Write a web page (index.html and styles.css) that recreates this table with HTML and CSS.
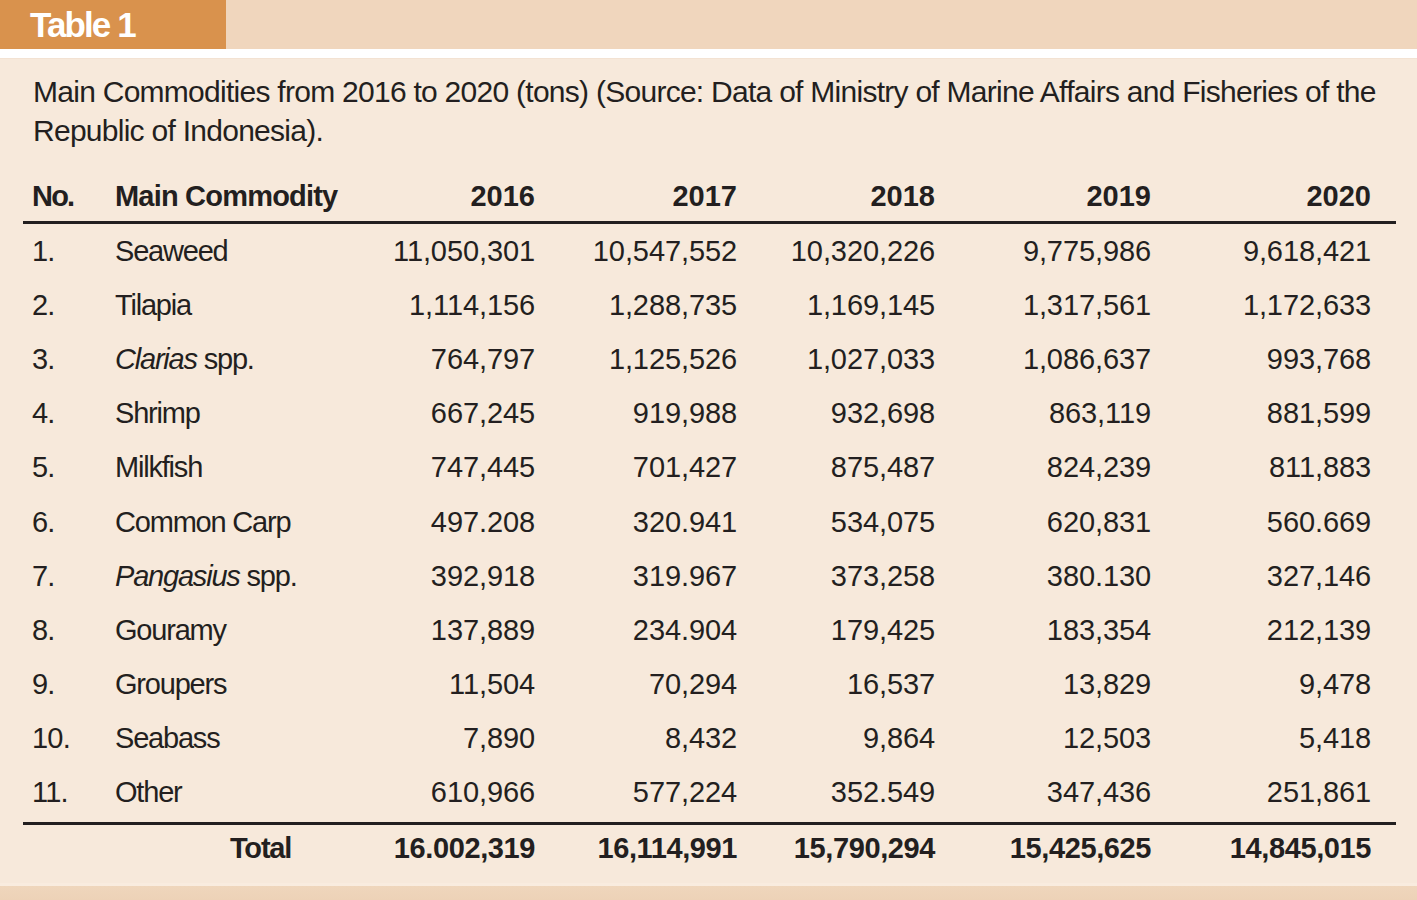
FILE: index.html
```html
<!DOCTYPE html>
<html lang="en">
<head>
<meta charset="utf-8">
<title>Table 1</title>
<link rel="stylesheet" href="styles.css">
</head>
<body>
<div class="page">
  <header class="topbar">
    <div class="tab">Table 1</div>
    <div class="fill"></div>
  </header>
  <div class="gap"></div>
  <main class="panel">
    <p class="caption">Main Commodities from 2016 to 2020 (tons) (Source: Data of Ministry of Marine Affairs and Fisheries of the Republic of Indonesia).</p>
    <table class="data">
      <colgroup>
        <col class="c-no"><col class="c-name"><col class="c-16"><col class="c-17"><col class="c-18"><col class="c-19"><col class="c-20">
      </colgroup>
      <thead>
        <tr><th class="no">No.</th><th class="name">Main Commodity</th><th class="num">2016</th><th class="num">2017</th><th class="num">2018</th><th class="num">2019</th><th class="num last">2020</th></tr>
      </thead>
      <tbody>
        <tr><td class="no">1.</td><td class="name">Seaweed</td><td class="num">11,050,301</td><td class="num">10,547,552</td><td class="num">10,320,226</td><td class="num">9,775,986</td><td class="num last">9,618,421</td></tr>
        <tr><td class="no">2.</td><td class="name">Tilapia</td><td class="num">1,114,156</td><td class="num">1,288,735</td><td class="num">1,169,145</td><td class="num">1,317,561</td><td class="num last">1,172,633</td></tr>
        <tr><td class="no">3.</td><td class="name"><i>Clarias</i> spp.</td><td class="num">764,797</td><td class="num">1,125,526</td><td class="num">1,027,033</td><td class="num">1,086,637</td><td class="num last">993,768</td></tr>
        <tr><td class="no">4.</td><td class="name">Shrimp</td><td class="num">667,245</td><td class="num">919,988</td><td class="num">932,698</td><td class="num">863,119</td><td class="num last">881,599</td></tr>
        <tr><td class="no">5.</td><td class="name">Milkfish</td><td class="num">747,445</td><td class="num">701,427</td><td class="num">875,487</td><td class="num">824,239</td><td class="num last">811,883</td></tr>
        <tr><td class="no">6.</td><td class="name">Common Carp</td><td class="num">497.208</td><td class="num">320.941</td><td class="num">534,075</td><td class="num">620,831</td><td class="num last">560.669</td></tr>
        <tr><td class="no">7.</td><td class="name"><i>Pangasius</i> spp.</td><td class="num">392,918</td><td class="num">319.967</td><td class="num">373,258</td><td class="num">380.130</td><td class="num last">327,146</td></tr>
        <tr><td class="no">8.</td><td class="name">Gouramy</td><td class="num">137,889</td><td class="num">234.904</td><td class="num">179,425</td><td class="num">183,354</td><td class="num last">212,139</td></tr>
        <tr><td class="no">9.</td><td class="name">Groupers</td><td class="num">11,504</td><td class="num">70,294</td><td class="num">16,537</td><td class="num">13,829</td><td class="num last">9,478</td></tr>
        <tr><td class="no">10.</td><td class="name">Seabass</td><td class="num">7,890</td><td class="num">8,432</td><td class="num">9,864</td><td class="num">12,503</td><td class="num last">5,418</td></tr>
        <tr class="end"><td class="no">11.</td><td class="name">Other</td><td class="num">610,966</td><td class="num">577,224</td><td class="num">352.549</td><td class="num">347,436</td><td class="num last">251,861</td></tr>
      </tbody>
      <tfoot>
        <tr><td class="no"></td><td class="total-label">Total</td><td class="num">16.002,319</td><td class="num">16,114,991</td><td class="num">15,790,294</td><td class="num">15,425,625</td><td class="num last">14,845,015</td></tr>
      </tfoot>
    </table>
  </main>
  <footer class="bottom"></footer>
</div>
</body>
</html>
```

FILE: styles.css
```css
html, body {
  margin: 0;
  padding: 0;
  background: #f7e9db;
}
body {
  font-family: "Liberation Sans", Arial, sans-serif;
  color: #231f20;
}
.page {
  width: 1417px;
  height: 900px;
  display: flex;
  flex-direction: column;
  overflow: hidden;
}
.topbar {
  display: flex;
  height: 49px;
  flex: none;
}
.tab {
  width: 196px;
  padding-left: 30px;
  background: #d9924d;
  color: #ffffff;
  font-weight: bold;
  font-size: 35px;
  line-height: 49px;
  letter-spacing: -1.9px;
}
.fill {
  flex: 1;
  background: #f0d6bd;
}
.gap {
  height: 9px;
  flex: none;
  background: #ffffff;
  border-bottom: 1px solid #f3e2d2;
}
.panel {
  flex: 1;
  padding: 13px 21px 0 23px;
  background: #f7e9db;
}
.caption {
  margin: 0;
  padding-left: 10px;
  font-size: 30px;
  line-height: 39px;
  letter-spacing: -0.73px;
}
.data {
  margin-top: 19px;
  width: 1373px;
  border-collapse: collapse;
  table-layout: fixed;
  font-size: 29px;
}
.c-no { width: 92px; }
.c-name { width: 235px; }
.c-16 { width: 185px; }
.c-17 { width: 202px; }
.c-18 { width: 198px; }
.c-19 { width: 216px; }
.c-20 { width: 245px; }
.data th, .data td {
  padding: 0;
  white-space: nowrap;
  vertical-align: middle;
}
.data th {
  font-weight: bold;
  height: 50px;
  border-bottom: 3px solid #231f20;
  padding-top: 2px;
  letter-spacing: -0.9px;
}
.data td {
  height: 54.2px;
}
.data .no {
  text-align: left;
  padding-left: 9px;
  letter-spacing: -0.8px;
}
.data th.no {
  letter-spacing: -1.8px;
}
.data .name {
  text-align: left;
  letter-spacing: -1.2px;
}
.data th.name {
  letter-spacing: -0.8px;
}
.data .num {
  text-align: right;
  letter-spacing: -0.1px;
}
.data th.num {
  letter-spacing: 0;
}
.data .last {
  padding-right: 25px;
}
.data tr.end td {
  height: 53px;
  padding-bottom: 3px;
  border-bottom: 3px solid #231f20;
}
.data tfoot td {
  font-weight: bold;
  height: 40px;
  padding-top: 4px;
}
.data tfoot .num {
  letter-spacing: -0.4px;
}
.data tfoot .last {
  padding-right: 25px;
}
.data .total-label {
  padding-left: 115px;
  text-align: left;
  letter-spacing: -1.2px;
}
.bottom {
  height: 14px;
  flex: none;
  background: linear-gradient(#efd6bc, #edd2b7);
  border-top: 3px solid #f9ecdf;
}
```
